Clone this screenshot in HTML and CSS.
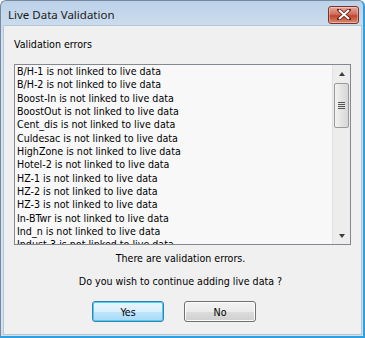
FILE: index.html
```
<!DOCTYPE html>
<html lang="en">
<head>
    <meta charset="UTF-8">
    <title>Live Data Validation</title>
    <link rel="stylesheet" href="styles.css">
</head>
<body>
    <div class="window">
        <div class="titlebar">
            <span class="title">Live Data Validation</span>
            <span class="close">
                <svg width="14" height="11" viewBox="0 0 14 11">
                    <path d="M2 1 L12 10 M12 1 L2 10" stroke="#5a1a12" stroke-width="3.6" stroke-linecap="square"/>
                    <path d="M2 1 L12 10 M12 1 L2 10" stroke="#ffffff" stroke-width="2"/>
                </svg>
            </span>
        </div>
        <div class="client">
            <div class="label">Validation errors</div>
            <div class="listbox">
                <ul class="items">
                    <li>B/H-1 is not linked to live data</li>
                    <li>B/H-2 is not linked to live data</li>
                    <li>Boost-In is not linked to live data</li>
                    <li>BoostOut is not linked to live data</li>
                    <li>Cent_dis is not linked to live data</li>
                    <li>Culdesac is not linked to live data</li>
                    <li>HighZone is not linked to live data</li>
                    <li>Hotel-2 is not linked to live data</li>
                    <li>HZ-1 is not linked to live data</li>
                    <li>HZ-2 is not linked to live data</li>
                    <li>HZ-3 is not linked to live data</li>
                    <li>In-BTwr is not linked to live data</li>
                    <li>Ind_n is not linked to live data</li>
                    <li>Indust-3 is not linked to live data</li>
                </ul>
                <div class="scrollbar">
                    <span class="arrow up"></span>
                    <div class="track">
                        <div class="thumb">
                            <span class="grip"></span>
                        </div>
                    </div>
                    <span class="arrow down"></span>
                </div>
            </div>
            <p class="msg first">There are validation errors.</p>
            <p class="msg">Do you wish to continue adding live data ?</p>
            <div class="buttons">
                <button class="btn default">Yes</button>
                <button class="btn">No</button>
            </div>
        </div>
    </div>
</body>
</html>
```

FILE: styles.css
```
body {
    margin: 0;
    font-family: "DejaVu Sans Condensed", "DejaVu Sans", sans-serif;
    font-size: 10.6px;
    color: #000;
    background: #fff;
}

.window {
    width: 365px;
    height: 338px;
    box-sizing: border-box;
    display: flex;
    flex-direction: column;
    background: linear-gradient(#bcd2e9, #d4e2f0 40px);
    border: 1px solid #76899f;
    border-right: 2px solid #2e9fe0;
    border-bottom: 2px solid #2e9fe0;
    border-radius: 6px 6px 0 0;
    padding: 0 1px 1px 2px;
}

.titlebar {
    height: 24px;
    display: flex;
    align-items: center;
    justify-content: space-between;
    padding: 0 3px 0 5px;
}

.title {
    font-family: "Noto Sans", sans-serif;
    font-size: 11.5px;
    color: #1b1b1b;
    margin-top: 2px;
}

.close {
    width: 29px;
    height: 16px;
    margin-top: 3px;
    display: flex;
    align-items: center;
    justify-content: center;
    border: 1px solid #7a3127;
    border-radius: 3px;
    background: linear-gradient(#e6a89b, #d16e5c 45%, #c0432e 55%, #d98c6e);
    box-shadow: inset 0 0 0 1px rgba(255, 255, 255, 0.35);
}

.client {
    flex: 1;
    background: #f0f0f0;
    border: 1px solid #b5c5d8;
    padding: 12px 10px 0 10px;
    display: flex;
    flex-direction: column;
}

.label {
    line-height: 13px;
    height: 13px;
    margin-bottom: 13px;
}

.listbox {
    display: flex;
    height: 181px;
    box-sizing: border-box;
    border: 1px solid #828790;
    background: #f8f8f8;
}

.items {
    flex: 1;
    margin: 0;
    padding: 0 0 0 2px;
    list-style: none;
    overflow: hidden;
}

.items li {
    height: 13.33px;
    line-height: 13.33px;
    white-space: nowrap;
}

.scrollbar {
    width: 17px;
    display: flex;
    flex-direction: column;
    background: #ededed;
    border-left: 1px solid #e2e2e2;
}

.arrow {
    height: 17px;
    display: flex;
    align-items: center;
    justify-content: center;
}

.arrow::before {
    content: "";
    border-left: 3.5px solid transparent;
    border-right: 3.5px solid transparent;
}

.arrow.up::before {
    border-bottom: 4px solid #3c3c3c;
}

.arrow.down::before {
    border-top: 4px solid #3c3c3c;
}

.track {
    flex: 1;
}

.thumb {
    height: 45px;
    margin: 1px 1px 0;
    box-sizing: border-box;
    border: 1px solid #9a9a9a;
    border-radius: 2px;
    background: linear-gradient(90deg, #f2f2f2, #e4e4e4 50%, #d6d6d6);
    display: flex;
    align-items: center;
    justify-content: center;
}

.grip {
    width: 7px;
    height: 7px;
    background: repeating-linear-gradient(#555 0 1px, transparent 1px 2px);
}

.msg {
    margin: 0;
    text-align: center;
    line-height: 13px;
    padding-right: 4px;
}

.msg.first {
    margin-top: 7px;
    margin-bottom: 10px;
}

.buttons {
    display: flex;
    gap: 20px;
    margin-top: 13px;
    padding-left: 78px;
}

.btn {
    width: 72px;
    height: 21px;
    font-family: "DejaVu Sans Condensed", "DejaVu Sans", sans-serif;
    font-size: 10.6px;
    color: #000;
    border: 1px solid #707070;
    border-radius: 3px;
    background: linear-gradient(#f2f2f2, #ebebeb 50%, #dddddd 51%, #cfcfcf);
    box-shadow: inset 0 0 0 1px #fcfcfc;
    padding: 0;
}

.btn.default {
    border-color: #3c7fb1;
    background: linear-gradient(#eaf6fd, #d9f0fc 50%, #bee6fd 51%, #a7d9f5);
    box-shadow: inset 0 0 0 1px #48d0f0;
}
```
